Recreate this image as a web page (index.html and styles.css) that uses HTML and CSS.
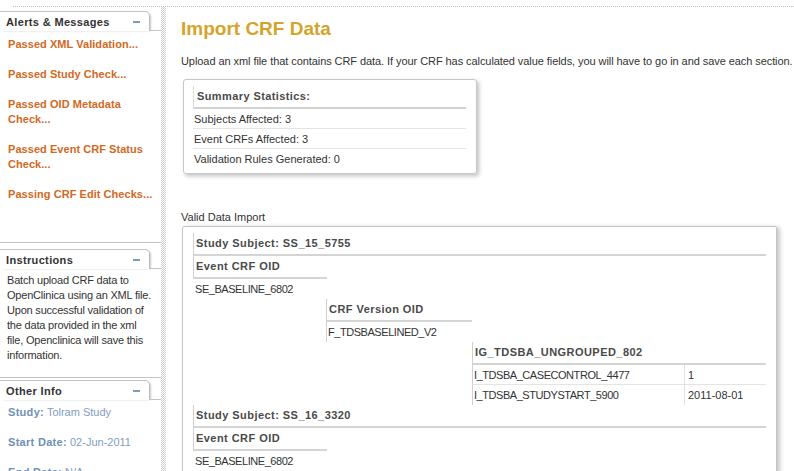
FILE: index.html
```html
<!DOCTYPE html>
<html lang="en">
<head>
<meta charset="utf-8">
<title>Import CRF Data</title>
<link rel="stylesheet" href="styles.css">
</head>
<body>
<div class="topline"></div>
<div class="layout">
  <aside class="sidebar">
    <section class="panel panel-alerts">
      <div class="panel-head"><div class="tab"><span>Alerts &amp; Messages</span><span class="minus"></span></div><div class="tab-fill"></div></div>
      <ul class="alerts">
        <li>Passed XML Validation...</li>
        <li>Passed Study Check...</li>
        <li>Passed OID Metadata<br>Check...</li>
        <li>Passed Event CRF Status<br>Check...</li>
        <li>Passing CRF Edit Checks...</li>
      </ul>
    </section>
    <section class="panel panel-instr">
      <div class="panel-head"><div class="tab"><span>Instructions</span><span class="minus"></span></div><div class="tab-fill"></div></div>
      <p class="instr">Batch upload CRF data to<br>OpenClinica using an XML file.<br>Upon successful validation of<br>the data provided in the xml<br>file, Openclinica will save this<br>information.</p>
    </section>
    <section class="panel panel-info">
      <div class="panel-head"><div class="tab"><span>Other Info</span><span class="minus"></span></div><div class="tab-fill"></div></div>
      <ul class="info">
        <li><b>Study:</b> Tolram Study</li>
        <li><b>Start Date:</b> 02-Jun-2011</li>
        <li><b>End Date:</b> N/A</li>
      </ul>
    </section>
  </aside>
  <div class="strip"></div>
  <main class="main">
    <h1 class="title">Import CRF Data</h1>
    <p class="desc">Upload an xml file that contains CRF data. If your CRF has calculated value fields, you will have to go in and save each section.</p>
    <div class="summary">
      <div class="s-hdr">Summary Statistics:</div>
      <div class="s-row">Subjects Affected: 3</div>
      <div class="s-row">Event CRFs Affected: 3</div>
      <div class="s-row">Validation Rules Generated: 0</div>
    </div>
    <div class="valid-label">Valid Data Import</div>
    <div class="import-box">
      <div class="subject">
        <div class="hdr bl">Study Subject: SS_15_5755</div>
        <div class="event">
          <div class="hdr bl">Event CRF OID</div>
          <div class="cell plain">SE_BASELINE_6802</div>
        </div>
        <div class="crf">
          <div class="hdr bl">CRF Version OID</div>
          <div class="cell bl">F_TDSBASELINED_V2</div>
        </div>
        <div class="ig">
          <div class="hdr bl">IG_TDSBA_UNGROUPED_802</div>
          <div class="igrow sep"><div class="cell bl">I_TDSBA_CASECONTROL_4477</div><div class="cell bl">1</div></div>
          <div class="igrow"><div class="cell bl">I_TDSBA_STUDYSTART_5900</div><div class="cell bl">2011-08-01</div></div>
        </div>
      </div>
      <div class="subject">
        <div class="hdr bl">Study Subject: SS_16_3320</div>
        <div class="event">
          <div class="hdr bl">Event CRF OID</div>
          <div class="cell plain">SE_BASELINE_6802</div>
        </div>
        <div class="crf">
          <div class="hdr bl">CRF Version OID</div>
          <div class="cell bl">F_TDSBASELINED_V2</div>
        </div>
        <div class="ig">
          <div class="hdr bl">IG_TDSBA_UNGROUPED_802</div>
          <div class="igrow sep"><div class="cell bl">I_TDSBA_CASECONTROL_4477</div><div class="cell bl">0</div></div>
          <div class="igrow"><div class="cell bl">I_TDSBA_STUDYSTART_5900</div><div class="cell bl">2011-08-01</div></div>
        </div>
      </div>
    </div>
  </main>
</div>
</body>
</html>
```
FILE: styles.css
```css
html, body {
  margin: 0;
  padding: 0;
  background: #fff;
}
body {
  font-family: "Liberation Sans", Arial, sans-serif;
  font-size: 11px;
  color: #333;
  width: 794px;
  height: 471px;
  overflow: hidden;
}
.topline {
  height: 6px;
  margin-left: 13px;
  border-bottom: 1px dotted #bdbdbd;
}
.layout {
  display: grid;
  grid-template-columns: 161px 5px 1fr;
  min-height: 600px;
}
.strip {
  background: repeating-conic-gradient(#cfcfcf 0 25%, #fff 0 50%) 0 0 / 2px 2px;
}

/* sidebar */
.panel-head {
  display: flex;
}
.tab {
  width: 150px;
  height: 20px;
  box-sizing: border-box;
  border-top: 1px solid #c4c4c4;
  border-right: 1px solid #bdbdbd;
  border-top-right-radius: 5px;
  box-shadow: 2px 1px 2px -1px #c8c8c8;
  display: flex;
  align-items: center;
  justify-content: space-between;
  padding: 0 9px 0 6px;
  font-weight: bold;
  letter-spacing: 0.35px;
  color: #333;
}
.minus {
  width: 7px;
  height: 2px;
  background: #7d9cc2;
}
.tab-fill {
  flex: 1;
  border-bottom: 1px solid #c4c4c4;
}
.panel-alerts {
  margin-top: 4px;
}
.panel-instr,
.panel-info {
  border-top: 1px solid #c4c4c4;
}
.panel-instr .panel-head {
  margin-top: 6px;
}
.panel-info .panel-head {
  margin-top: 2px;
}
.alerts,
.info {
  list-style: none;
  margin: 0;
  padding: 0 0 0 8px;
}
.alerts {
  padding-top: 6px;
  padding-bottom: 40px;
}
.alerts li {
  line-height: 15px;
  font-weight: bold;
  letter-spacing: 0.05px;
  color: #d2691e;
  margin-bottom: 15px;
}
.alerts li:last-child {
  margin-bottom: 0;
}
.instr {
  margin: 4px 0 0;
  padding: 0 0 14px 7px;
  line-height: 15px;
  letter-spacing: -0.2px;
  color: #333;
}
.info {
  padding-top: 5px;
}
.info li {
  line-height: 15px;
  margin-bottom: 15px;
  color: #7f9dc1;
}
.info b {
  color: #6f90b8;
  letter-spacing: 0.3px;
}

/* main */
.main {
  padding: 11px 0 0 15px;
  min-width: 0;
}
.title {
  margin: 0;
  font-size: 19px;
  line-height: 22px;
  font-weight: bold;
  color: #d4a42a;
}
.desc {
  margin: 14px 0 0;
  line-height: 14px;
  letter-spacing: -0.07px;
  white-space: nowrap;
}
.summary {
  margin: 11px 0 0 2px;
  width: 294px;
  box-sizing: border-box;
  border: 1px solid #c8c8c8;
  border-radius: 3px;
  box-shadow: 2px 2px 4px rgba(0, 0, 0, 0.25);
  padding: 6px 10px 4px 9px;
}
.s-hdr {
  height: 21px;
  line-height: 21px;
  border-left: 1px solid #dcdcdc;
  border-bottom: 2px solid #d2d2d2;
  padding-left: 3px;
  font-weight: bold;
  letter-spacing: 0.4px;
  color: #4a4a4a;
}
.s-row {
  height: 20px;
  line-height: 20px;
  box-sizing: border-box;
  padding-left: 1px;
  border-bottom: 1px solid #e4e4e4;
}
.s-row:last-child {
  border-bottom: 0;
}
.valid-label {
  margin-top: 36px;
  line-height: 14px;
}
.import-box {
  margin: 2px 0 0 1px;
  width: 595px;
  box-sizing: border-box;
  border: 1px solid #c4c4c4;
  border-radius: 2px;
  box-shadow: 3px 1px 4px rgba(0, 0, 0, 0.22);
  padding: 6px 9px 20px 10px;
}
.subject {
  width: 573px;
}
.hdr {
  height: 21px;
  line-height: 21px;
  border-bottom: 2px solid #d4d4d4;
  padding-left: 2px;
  font-weight: bold;
  letter-spacing: 0.45px;
  color: #4a4a4a;
}
.bl {
  border-left: 1px solid #d0d0d0;
}
.cell {
  height: 20px;
  line-height: 20px;
  box-sizing: border-box;
  padding-left: 1px;
  letter-spacing: -0.45px;
  white-space: nowrap;
}
.cell.plain {
  padding-left: 2px;
}
.event {
  width: 134px;
}
.crf {
  margin-left: 133px;
  width: 146px;
}
.ig {
  margin-left: 279px;
  width: 294px;
}
.igrow {
  display: grid;
  grid-template-columns: 212px 82px;
}
.igrow .cell + .cell {
  border-left-color: #e2e2e2;
  padding-left: 3px;
  letter-spacing: 0;
}
.igrow.sep .cell {
  border-bottom: 1px solid #e4e4e4;
}
```
